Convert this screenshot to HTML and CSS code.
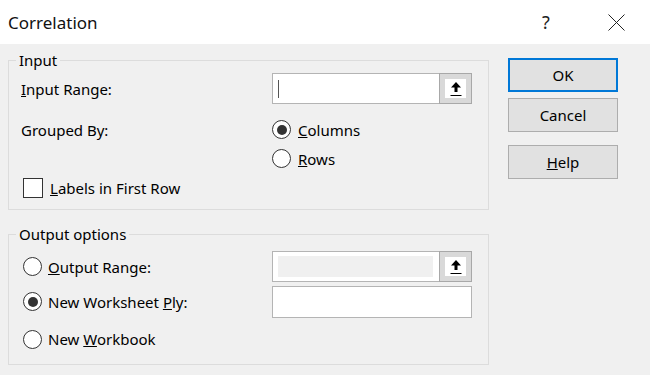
FILE: index.html
```html
<!DOCTYPE html>
<html>
<head>
    <title>Correlation</title>
    <link rel="stylesheet" href="styles.css">
</head>
<body>
    <div class="titlebar">
        <span class="title">Correlation</span>
        <span class="help-q">?</span>
        <span class="close">
            <svg width="17" height="17" viewBox="0 0 17 17"><path d="M0.5 0.5 L16.5 16.5 M16.5 0.5 L0.5 16.5" stroke="#222" stroke-width="1" fill="none"/></svg>
        </span>
    </div>

    <div class="dialog">
        <div class="panels">
            <fieldset class="group group-input">
                <legend>Input</legend>
                <div class="row row-range">
                    <span class="label"><u>I</u>nput Range:</span>
                    <div class="refedit">
                        <span class="ref-text"><span class="caret"></span></span>
                        <span class="ref-btn">
                            <span class="ref-btn-face">
                                <svg width="12" height="16" viewBox="0 0 12 16"><path d="M6 1 L11 6.5 L7.5 6.5 L7.5 11 L4.5 11 L4.5 6.5 L1 6.5 Z" fill="#000"/><path d="M0.5 14.5 H11.5" stroke="#000" stroke-width="1"/></svg>
                            </span>
                        </span>
                    </div>
                </div>
                <div class="row row-opt">
                    <span class="label">Grouped By:</span>
                    <label class="radio checked"><span class="dot"></span><span><u>C</u>olumns</span></label>
                </div>
                <div class="row row-opt">
                    <span class="label"></span>
                    <label class="radio"><span class="dot"></span><span><u>R</u>ows</span></label>
                </div>
                <div class="row row-check">
                    <label class="check"><span class="box"></span><span><u>L</u>abels in First Row</span></label>
                </div>
            </fieldset>

            <fieldset class="group group-output">
                <legend>Output options</legend>
                <div class="row row-out">
                    <label class="radio label"><span class="dot"></span><span><u>O</u>utput Range:</span></label>
                    <div class="refedit">
                        <span class="ref-text"><span class="ref-disabled"></span></span>
                        <span class="ref-btn">
                            <span class="ref-btn-face">
                                <svg width="12" height="16" viewBox="0 0 12 16"><path d="M6 1 L11 6.5 L7.5 6.5 L7.5 11 L4.5 11 L4.5 6.5 L1 6.5 Z" fill="#000"/><path d="M0.5 14.5 H11.5" stroke="#000" stroke-width="1"/></svg>
                            </span>
                        </span>
                    </div>
                </div>
                <div class="row row-out">
                    <label class="radio label checked"><span class="dot"></span><span>New Worksheet <u>P</u>ly:</span></label>
                    <div class="textbox"></div>
                </div>
                <div class="row row-last">
                    <label class="radio label"><span class="dot"></span><span>New <u>W</u>orkbook</span></label>
                </div>
            </fieldset>
        </div>

        <div class="buttons">
            <button class="btn btn-default">OK</button>
            <button class="btn">Cancel</button>
            <button class="btn btn-help"><u>H</u>elp</button>
        </div>
    </div>
</body>
</html>
```

FILE: styles.css
```css
body {
    margin: 0;
    background-color: #f0f0f0;
    font-family: "Noto Sans", "Open Sans", sans-serif;
    font-size: 15px;
    color: #000;
    width: 650px;
    height: 375px;
    overflow: hidden;
}
.titlebar {
    height: 44px;
    background-color: #fff;
    display: flex;
    align-items: center;
}
.title {
    font-size: 17px;
    margin-left: 8px;
    flex: 1;
    color: #111;
}
.help-q {
    font-size: 18px;
    color: #222;
    width: 16px;
    margin-right: 50px;
}
.close {
    display: flex;
    margin-right: 25px;
}
.dialog {
    display: flex;
    padding: 0 8px;
    gap: 19px;
}
.panels {
    width: 481px;
    display: flex;
    flex-direction: column;
    padding-top: 6px;
}
.group {
    margin: 0;
    border: 1px solid #dcdcdc;
    padding: 0 12px;
}
.group legend {
    line-height: 20px;
    padding: 0 3px;
    margin-left: -5px;
}
.group-input {
    padding-top: 3px;
    padding-bottom: 6px;
}
.group-output {
    margin-top: 14px;
    padding-top: 7px;
    padding-bottom: 10px;
}
.row {
    display: flex;
    align-items: center;
}
.label {
    width: 251px;
    flex-shrink: 0;
}
.row-range {
    height: 31px;
}
.row-opt {
    height: 29px;
}
.row-range + .row-opt {
    margin-top: 11px;
}
.row-check {
    height: 30px;
}
.row-out {
    height: 31px;
}
.row-out + .row-out {
    margin-top: 4px;
}
.row-last {
    height: 30px;
    margin-top: 7px;
}
.radio, .check {
    display: flex;
    align-items: center;
    gap: 7px;
}
.group-output .radio {
    margin-left: 2px;
    gap: 6px;
}
.group-output .label {
    width: 249px;
}
.dot {
    width: 17px;
    height: 17px;
    border: 1.5px solid #333;
    border-radius: 50%;
    background-color: #fff;
    display: flex;
    align-items: center;
    justify-content: center;
}
.radio.checked .dot::after {
    content: "";
    width: 10px;
    height: 10px;
    border-radius: 50%;
    background-color: #333;
}
.check {
    margin-left: 2px;
}
.box {
    width: 18px;
    height: 18px;
    border: 1px solid #333;
    background-color: #fff;
}
.refedit {
    width: 198px;
    height: 29px;
    border: 1px solid #b4b4b4;
    background-color: #fff;
    display: flex;
}
.ref-text {
    flex: 1;
    display: flex;
    align-items: center;
    padding-left: 5px;
}
.caret {
    width: 1px;
    height: 18px;
    background-color: #555;
}
.ref-disabled {
    width: 155px;
    height: 21px;
    background-color: #f0f0f0;
}
.ref-btn {
    width: 33px;
    margin: -1px -1px -1px 0;
    box-sizing: border-box;
    border: 1px solid #a8a8a8;
    background-color: #d9d9d9;
    padding: 5px;
    display: flex;
}
.ref-btn-face {
    flex: 1;
    background-color: #fff;
    display: flex;
    align-items: center;
    justify-content: center;
}
.textbox {
    width: 198px;
    height: 30px;
    border: 1px solid #b4b4b4;
    background-color: #fff;
}
.buttons {
    display: flex;
    flex-direction: column;
    padding-top: 14px;
}
.btn {
    width: 110px;
    height: 34px;
    font-family: inherit;
    font-size: 15px;
    color: #000;
    background-color: #e1e1e1;
    border: 1px solid #adadad;
    padding: 0;
    margin-bottom: 6px;
}
.btn-default {
    border: 2px solid #0078d7;
}
.btn-help {
    margin-top: 7px;
}
```
